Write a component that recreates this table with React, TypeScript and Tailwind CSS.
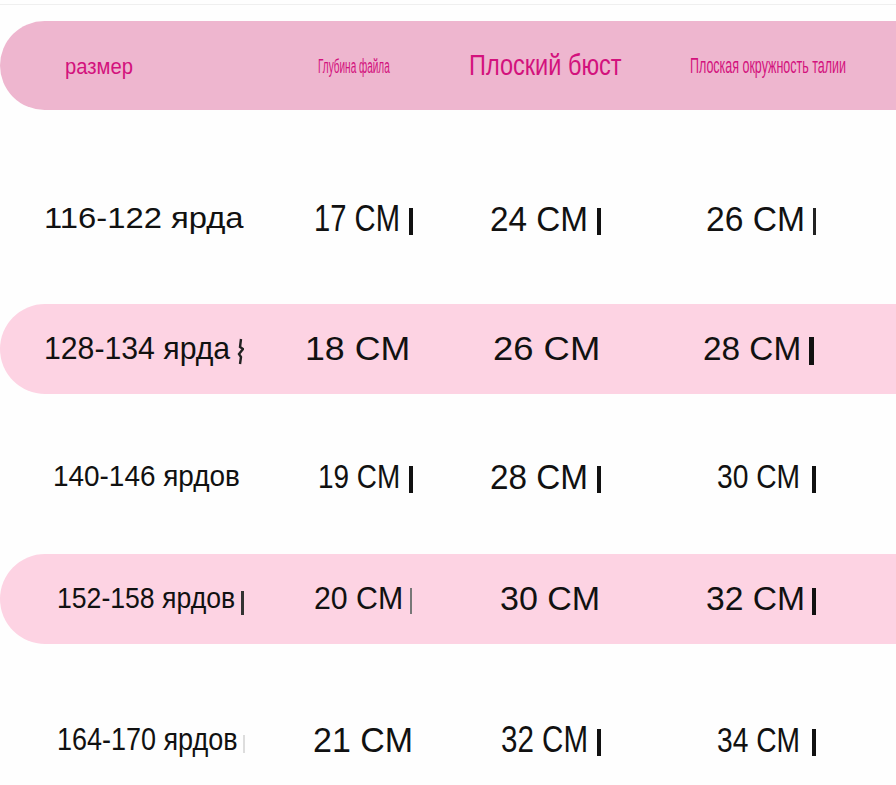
import { useLayoutEffect, useRef, useState } from "react";

type Cell = {
  text: string;
  pad: string;
  box: string;
  font: string;
  bar?: string;
  zig?: boolean;
};

type Row = {
  band: string;
  cells: Cell[];
};

const HEAD: Cell[] = [
  { text: "размер", pad: "pl-[65px]", box: "w-[68px]", font: "text-[22px] translate-y-[3px]" },
  { text: "Глубина файла", pad: "pl-[18px]", box: "w-[72px]", font: "text-[20px] translate-y-[2px]" },
  { text: "Плоский бюст", pad: "pl-[9px]", box: "w-[153px]", font: "text-[30px]" },
  { text: "Плоская окружность талии", pad: "pl-[10px]", box: "w-[156px]", font: "text-[22px] translate-y-[2px]" },
];

const ROWS: Row[] = [
  {
    band: "mt-[64px]",
    cells: [
      { text: "116-122 ярда", pad: "pl-[44px]", box: "w-[200px]", font: "text-[30px]" },
      { text: "17 CM", pad: "pl-[14px]", box: "w-[86px]", font: "text-[37px]", bar: "ml-[9px] w-[4px] h-[27px] bg-[#111]" },
      { text: "24 CM", pad: "pl-[30px]", box: "w-[98px]", font: "text-[35px]", bar: "ml-[9px] w-[4px] h-[27px] bg-[#111]" },
      { text: "26 CM", pad: "pl-[26px]", box: "w-[99px]", font: "text-[35px]", bar: "ml-[8px] w-[3px] h-[27px] bg-[#222]" },
    ],
  },
  {
    band: "mt-[40px] bg-[#fdd3e3] rounded-l-full",
    cells: [
      { text: "128-134 ярда", pad: "pl-[44px]", box: "w-[186px]", font: "text-[32px]", zig: true },
      { text: "18 CM", pad: "pl-[5px]", box: "w-[105px]", font: "text-[33px]" },
      { text: "26 CM", pad: "pl-[33px]", box: "w-[107px]", font: "text-[33px]" },
      { text: "28 CM", pad: "pl-[23px]", box: "w-[98px]", font: "text-[33px]", bar: "ml-[8px] w-[5px] h-[28px] bg-[#111]" },
    ],
  },
  {
    band: "mt-[38px]",
    cells: [
      { text: "140-146 ярдов", pad: "pl-[53px]", box: "w-[187px]", font: "text-[30px]" },
      { text: "19 CM", pad: "pl-[18px]", box: "w-[82px]", font: "text-[34px]", bar: "ml-[9px] w-[4px] h-[27px] bg-[#111]" },
      { text: "28 CM", pad: "pl-[30px]", box: "w-[98px]", font: "text-[35px]", bar: "ml-[9px] w-[4px] h-[27px] bg-[#111]" },
      { text: "30 CM", pad: "pl-[37px]", box: "w-[83px]", font: "text-[34px]", bar: "ml-[12px] w-[4px] h-[27px] bg-[#111]" },
    ],
  },
  {
    band: "mt-[32px] bg-[#fdd3e3] rounded-l-full",
    cells: [
      { text: "152-158 ярдов", pad: "pl-[57px]", box: "w-[178px]", font: "text-[29px]", bar: "ml-[6px] w-[3px] h-[24px] bg-[#333] translate-y-[4px]" },
      { text: "20 CM", pad: "pl-[14px]", box: "w-[89px]", font: "text-[32px]", bar: "ml-[7px] w-[2px] h-[26px] bg-[#777]" },
      { text: "30 CM", pad: "pl-[40px]", box: "w-[100px]", font: "text-[33px]" },
      { text: "32 CM", pad: "pl-[26px]", box: "w-[99px]", font: "text-[34px]", bar: "ml-[7px] w-[4px] h-[27px] bg-[#111]" },
    ],
  },
  {
    band: "mt-[51px]",
    cells: [
      { text: "164-170 ярдов", pad: "pl-[57px]", box: "w-[181px]", font: "text-[31px]", bar: "ml-[5px] w-[2px] h-[18px] bg-[#ddd] translate-y-[4px]" },
      { text: "21 CM", pad: "pl-[13px]", box: "w-[100px]", font: "text-[35px]" },
      { text: "32 CM", pad: "pl-[41px]", box: "w-[87px]", font: "text-[36px]", bar: "ml-[9px] w-[4px] h-[27px] bg-[#111]" },
      { text: "34 CM", pad: "pl-[37px]", box: "w-[83px]", font: "text-[35px]", bar: "ml-[12px] w-[4px] h-[27px] bg-[#111]" },
    ],
  },
];

// squeezes the text so it fills its box, like the stretched chart image
function Fit({ text, box, font }: { text: string; box: string; font: string }) {
  const outer = useRef<HTMLSpanElement>(null);
  const inner = useRef<HTMLSpanElement>(null);
  const [sx, setSx] = useState(1);

  useLayoutEffect(() => {
    if (outer.current && inner.current && inner.current.offsetWidth) {
      setSx(outer.current.clientWidth / inner.current.offsetWidth);
    }
  }, []);

  return (
    <span ref={outer} className={`block shrink-0 ${box}`}>
      <span
        ref={inner}
        className={`inline-block origin-left whitespace-nowrap leading-none ${font}`}
        style={{ transform: `scaleX(${sx})` }}
      >
        {text}
      </span>
    </span>
  );
}

function Zig() {
  return (
    <svg className="ml-[7px] translate-y-[2px]" width="7" height="27" viewBox="0 0 7 27">
      <path d="M4 1 L3 9 L6 11 L2 16 L4 19 L3 26" fill="none" stroke="#222" strokeWidth="2.4" />
    </svg>
  );
}

function TableCell({ cell, head }: { cell: Cell; head?: boolean }) {
  return (
    <div className={`flex items-center ${cell.pad} ${head ? "text-[#d3127d]" : "text-[#111]"}`}>
      <Fit text={cell.text} box={cell.box} font={cell.font} />
      {cell.bar && <span className={`block shrink-0 translate-y-[2px] ${cell.bar}`} />}
      {cell.zig && <Zig />}
    </div>
  );
}

export default function App() {
  return (
    <div
      className="w-[896px] h-[785px] overflow-hidden bg-[#fefefe]"
      style={{ fontFamily: '"Liberation Sans", Arial, sans-serif' }}
    >
      <div className="h-[4px]" />
      <div className="h-px bg-[#efefef]" />
      <div className="mt-[16px] h-[89px] rounded-l-full bg-[#eeb6cf] grid grid-cols-[300px_160px_220px_216px] items-center">
        {HEAD.map((c) => (
          <TableCell key={c.text} cell={c} head />
        ))}
      </div>
      {ROWS.map((row, i) => (
        <div key={i} className={`h-[90px] grid grid-cols-[300px_160px_220px_216px] items-center ${row.band}`}>
          {row.cells.map((c) => (
            <TableCell key={c.text} cell={c} />
          ))}
        </div>
      ))}
    </div>
  );
}
